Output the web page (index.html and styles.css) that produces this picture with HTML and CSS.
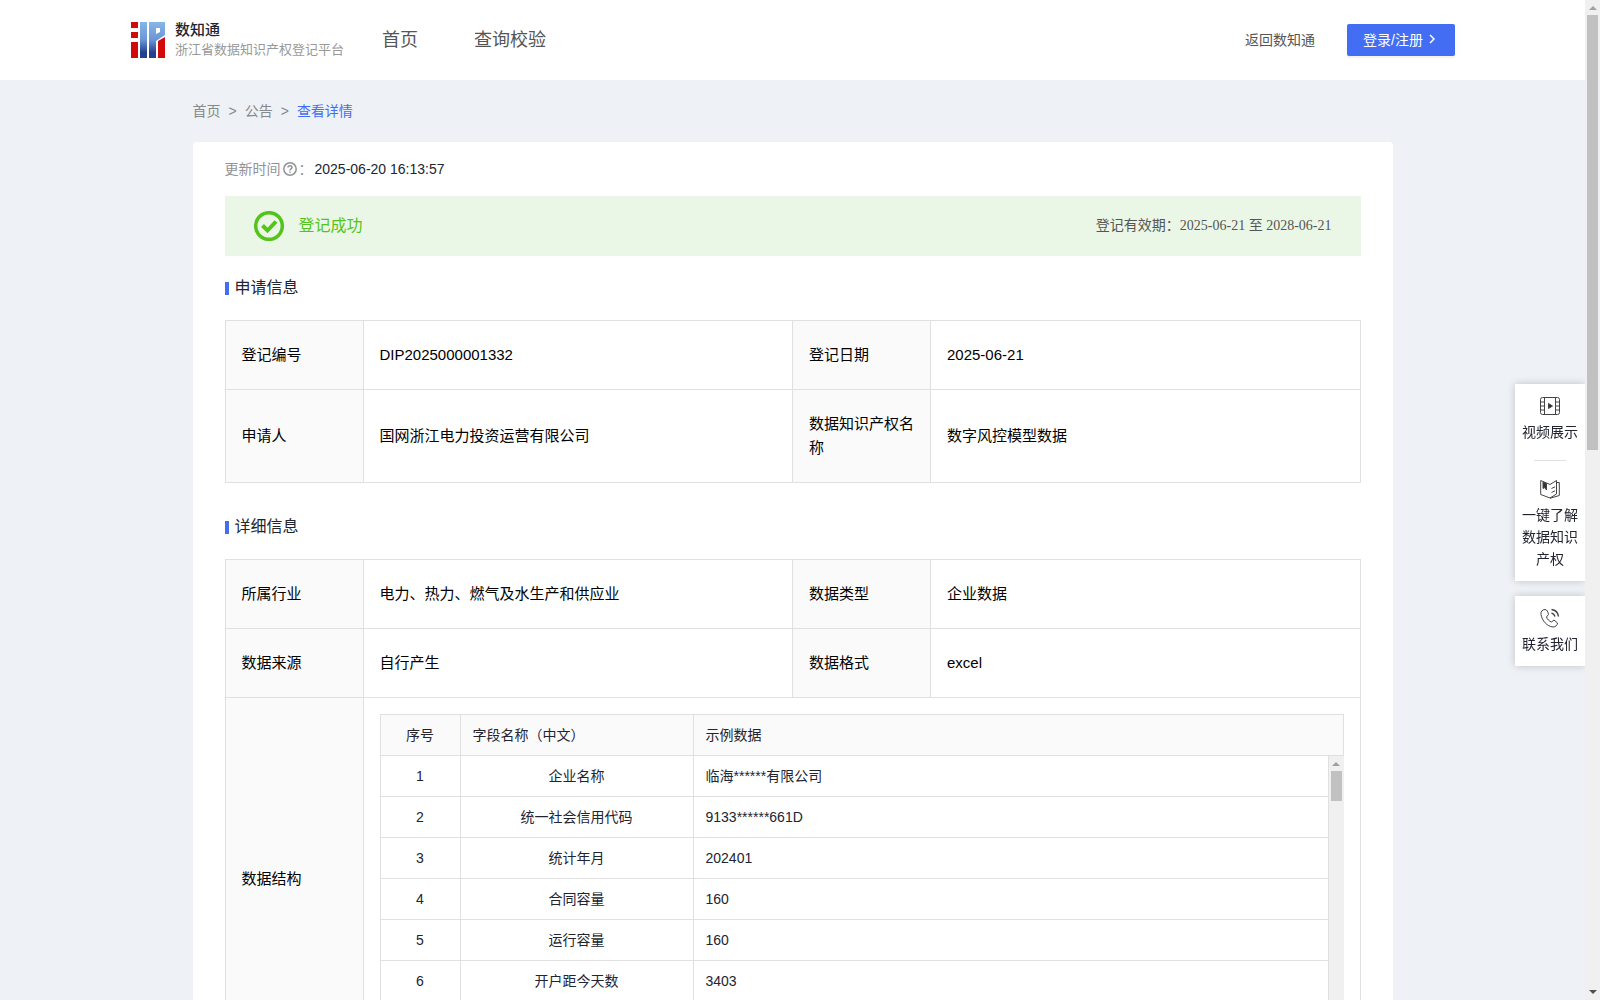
FILE: index.html
```html
<!DOCTYPE html>
<html lang="zh-CN">
<head>
    <meta charset="UTF-8">
    <meta name="viewport" content="width=device-width, initial-scale=1.0">
    <title>数知通</title>
    <link rel="stylesheet" href="styles.css">
</head>
<body>

    <header class="header">
        <a class="logo" href="#">
            <svg width="34" height="36" viewBox="0 0 34 36">
                <defs>
                    <linearGradient id="blue" x1="0" y1="0" x2="0" y2="1">
                        <stop offset="0" stop-color="#86b6e8"/>
                        <stop offset="0.5" stop-color="#6b94d6"/>
                        <stop offset="0.85" stop-color="#24408f"/>
                        <stop offset="1" stop-color="#24408f"/>
                    </linearGradient>
                </defs>
                <path fill="#d40909" d="M0 0h7v6H0zM0 10h7v6H0zM0 20h7v16H0zM27 19l7-4v21h-7z"/>
                <path fill="url(#blue)" d="M9 0h7v36H9zM18 0h16v13l-9 6v17h-7zM25 6v6l4-2V6z" fill-rule="evenodd"/>
            </svg>
            <span class="logo-text">
                <strong>数知通</strong>
                <small>浙江省数据知识产权登记平台</small>
            </span>
        </a>
        <nav class="nav">
            <a href="#">首页</a>
            <a href="#">查询校验</a>
        </nav>
        <div class="header-right">
            <a href="#">返回数知通</a>
            <button class="login" type="button">
                登录/注册
                <svg width="8" height="10" viewBox="0 0 8 10"><path d="M2 1l4 4-4 4" fill="none" stroke="#fff" stroke-width="1.5"/></svg>
            </button>
        </div>
    </header>

    <main class="container">
        <div class="breadcrumb">
            <a href="#">首页</a><span>&gt;</span><a href="#">公告</a><span>&gt;</span><a class="active" href="#">查看详情</a>
        </div>

        <div class="card">
            <div class="update">
                <span class="update-label">更新时间</span>
                <svg width="14" height="14" viewBox="0 0 14 14" fill="none" stroke="#909399" stroke-width="1.5">
                    <circle cx="7" cy="7" r="6.2"/>
                    <path d="M5 5.6c0-2.6 4-2.6 4 0C9 6.9 7 6.9 7 8.4M7 9.6v1.2"/>
                </svg>
                <span class="update-label">：</span>
                <span>2025-06-20 16:13:57</span>
            </div>

            <div class="banner">
                <svg width="30" height="30" viewBox="0 0 30 30" fill="none" stroke="#52c41a">
                    <circle cx="15" cy="15" r="13.3" stroke-width="3.5"/>
                    <path d="M8.5 14.5l5 5 8.5-9" stroke-width="4"/>
                </svg>
                <span class="banner-title">登记成功</span>
                <span class="banner-date">登记有效期：2025-06-21 至 2028-06-21</span>
            </div>

            <h2 class="title">申请信息</h2>
            <table class="info">
                <colgroup><col class="col-label"><col><col class="col-label"><col></colgroup>
                <tr>
                    <th>登记编号</th>
                    <td>DIP2025000001332</td>
                    <th>登记日期</th>
                    <td>2025-06-21</td>
                </tr>
                <tr>
                    <th>申请人</th>
                    <td>国网浙江电力投资运营有限公司</td>
                    <th>数据知识产权名称</th>
                    <td>数字风控模型数据</td>
                </tr>
            </table>

            <h2 class="title">详细信息</h2>
            <table class="info">
                <colgroup><col class="col-label"><col><col class="col-label"><col></colgroup>
                <tr>
                    <th>所属行业</th>
                    <td>电力、热力、燃气及水生产和供应业</td>
                    <th>数据类型</th>
                    <td>企业数据</td>
                </tr>
                <tr>
                    <th>数据来源</th>
                    <td>自行产生</td>
                    <th>数据格式</th>
                    <td>excel</td>
                </tr>
                <tr>
                    <th>数据结构</th>
                    <td class="struct" colspan="3">
                        <table class="fields">
                            <colgroup><col class="col-no"><col class="col-name"><col></colgroup>
                            <tr>
                                <th class="center">序号</th>
                                <th>字段名称（中文）</th>
                                <th>示例数据</th>
                            </tr>
                        </table>
                        <div class="fields-body">
                            <div class="fields-scroll">
                                <table class="fields">
                                    <colgroup><col class="col-no"><col class="col-name"><col></colgroup>
                                    <tr><td>1</td><td>企业名称</td><td>临海******有限公司</td></tr>
                                    <tr><td>2</td><td>统一社会信用代码</td><td>9133******661D</td></tr>
                                    <tr><td>3</td><td>统计年月</td><td>202401</td></tr>
                                    <tr><td>4</td><td>合同容量</td><td>160</td></tr>
                                    <tr><td>5</td><td>运行容量</td><td>160</td></tr>
                                    <tr><td>6</td><td>开户距今天数</td><td>3403</td></tr>
                                </table>
                            </div>
                            <div class="scrollbar"><div class="thumb thumb-small"></div></div>
                        </div>
                    </td>
                </tr>
            </table>
        </div>
    </main>

    <aside class="side">
        <div class="side-box">
            <a href="#">
                <svg width="20" height="20" viewBox="0 0 20 20" fill="none" stroke="#444">
                    <rect x="0.5" y="1.5" width="19" height="17" rx="2"/>
                    <path d="M4.5 1.5v17M15.5 1.5v17M.5 6h4M.5 10h4M.5 14h4M15.5 6h4M15.5 10h4M15.5 14h4"/>
                    <path d="M8.5 7.5l4 2.5-4 2.5z" fill="#333"/>
                </svg>
                视频展示
            </a>
            <a href="#">
                <svg width="20" height="20" viewBox="0 0 20 20" fill="none" stroke="#444">
                    <path d="M.7 1.500l9.300 4 6.500-4V15L10 19 .7 15.500zM16.500 3.500h2.800v13L10 19.300M11.500 9.500l3.500-1.700M11.500 13.500l3.500-1.700"/>
                    <path d="M3 3v6.500l1.500-1L6.500 11V4.500z" fill="#333"/>
                </svg>
                一键了解数据知识产权
            </a>
        </div>
        <div class="side-box">
            <a href="#">
                <svg width="20" height="20" viewBox="0 0 20 20" fill="none" stroke="#444">
                    <path d="M5 1.500c-2.500 0-4.500 2-4 5 1 6 6 12 12 12.500 2.500 0 4.500-2 4.500-4l-3.500-3-2.500 2c-2-.5-4.500-3-5-5l2-2.500c-.5-2.500-1.500-5-3.500-5z"/>
                    <path d="M11.500 5c2 .5 3 1.700 3.500 3.500M11.500 1.500c4 .5 6.500 3.500 7 7" stroke-width="1.5"/>
                </svg>
                联系我们
            </a>
        </div>
    </aside>

    <div class="scrollbar scrollbar-page"><div class="thumb"></div></div>

</body>
</html>
```
FILE: styles.css
```css
* {
    box-sizing: border-box;
}
body {
    margin: 0;
    padding-right: 15px;
    background-color: #eef2f6;
    font-family: "Liberation Sans", "Noto Sans CJK SC", sans-serif;
    font-size: 14px;
    line-height: 22px;
    color: #222431;
}
a {
    color: inherit;
    text-decoration: none;
}
svg {
    flex: none;
}
.header {
    display: flex;
    align-items: center;
    height: 80px;
    padding: 0 130px 0 131px;
    background-color: #fff;
}
.logo {
    display: flex;
    align-items: center;
    gap: 10px;
}
.logo-text {
    display: flex;
    flex-direction: column;
}
.logo-text strong {
    font-size: 15px;
    line-height: 20px;
    font-weight: 500;
}
.logo-text small {
    font-size: 13px;
    line-height: 20px;
    color: #999;
}
.nav {
    display: flex;
    gap: 56px;
    margin-left: 38px;
    font-size: 18px;
    color: #555;
}
.header-right {
    display: flex;
    align-items: center;
    gap: 32px;
    margin-left: auto;
    color: #555;
}
.login {
    display: flex;
    align-items: center;
    gap: 5px;
    height: 32px;
    padding: 0 19px 2px 16px;
    border: none;
    border-radius: 2px;
    background-color: #436ef3;
    box-shadow: 0 2px 0 rgba(0, 0, 0, 0.05);
    color: #fff;
    font-family: inherit;
    font-size: 14px;
    cursor: pointer;
}
.container {
    max-width: 1200px;
    margin: 0 auto;
}
.breadcrumb {
    display: flex;
    gap: 8px;
    padding: 20px 0;
    color: #86888c;
}
.breadcrumb .active {
    color: #436ef3;
}
.card {
    padding: 16px 32px 32px;
    border-radius: 4px;
    background-color: #fff;
}
.update {
    display: flex;
    align-items: center;
    gap: 2px;
}
.update-label {
    color: #909399;
}
.banner {
    display: flex;
    align-items: center;
    height: 60px;
    margin-top: 16px;
    padding: 0 29px;
    background-color: #ebf7e6;
}
.banner-title {
    margin-left: 15px;
    font-size: 16px;
    color: #52c41a;
}
.banner-date {
    margin-left: auto;
    font-family: "Liberation Serif", "Noto Sans CJK SC", serif;
    color: #555;
}
.title {
    display: flex;
    align-items: center;
    gap: 6px;
    margin: 20px 0;
    font-size: 16px;
    line-height: 24px;
    font-weight: normal;
}
.title::before {
    content: "";
    width: 4px;
    height: 13px;
    background-color: #436ef3;
}
.info {
    width: 100%;
    margin-bottom: 32px;
    border-collapse: collapse;
    table-layout: fixed;
    font-size: 15px;
    line-height: 24px;
    color: #000;
}
.info th, .info td {
    padding: 22px 16px;
    border: 1px solid #e0e0e0;
    text-align: left;
    font-weight: normal;
}
.info th {
    background-color: #fafafa;
}
.col-label {
    width: 138px;
}
.info .struct {
    padding: 16px;
}
.fields {
    width: 100%;
    border-collapse: collapse;
    table-layout: fixed;
    font-size: 14px;
    line-height: 22px;
    color: #222431;
}
.info .fields th, .info .fields td {
    padding: 9px 12px;
}
.info .fields td {
    border-top: none;
}
.info .fields .center, .info .fields td:nth-child(-n+2) {
    text-align: center;
}
.col-no {
    width: 80px;
}
.col-name {
    width: 233px;
}
.fields-body {
    display: flex;
    height: 288px;
}
.fields-scroll {
    flex: 1;
    overflow: hidden;
}

/* scrollbars */
.scrollbar {
    display: flex;
    flex-direction: column;
    align-items: center;
    width: 15px;
    padding: 6px 0;
    background-color: #f0f0f0;
}
.scrollbar::before, .scrollbar::after {
    content: "";
    border: 4px solid transparent;
}
.scrollbar::before {
    border-top: none;
    border-bottom-color: #a0a0a0;
}
.scrollbar::after {
    margin-top: auto;
    border-bottom: none;
    border-top-color: #505050;
}
.thumb {
    width: 11px;
    height: 44%;
    margin-top: 5px;
    background-color: #c1c1c1;
}
.thumb-small {
    height: 30px;
}
.scrollbar-page {
    position: fixed;
    top: 0;
    right: 0;
    bottom: 0;
}

.side {
    position: fixed;
    top: 384px;
    right: 15px;
    display: flex;
    flex-direction: column;
    gap: 15px;
    width: 70px;
}
.side-box {
    padding: 0 6px;
    background-color: #fff;
    box-shadow: 0 0 8px rgba(0, 0, 0, 0.2);
}
.side-box a {
    display: flex;
    flex-direction: column;
    align-items: center;
    gap: 5px;
    padding: 12px 0 11px;
    text-align: center;
}
.side-box a:not(:last-child) {
    padding-bottom: 17px;
}
.side-box a + a {
    padding-top: 0;
}
.side-box a + a::before {
    content: "";
    width: 32px;
    height: 1px;
    margin-bottom: 13px;
    background-color: #e0e0e0;
}
```
